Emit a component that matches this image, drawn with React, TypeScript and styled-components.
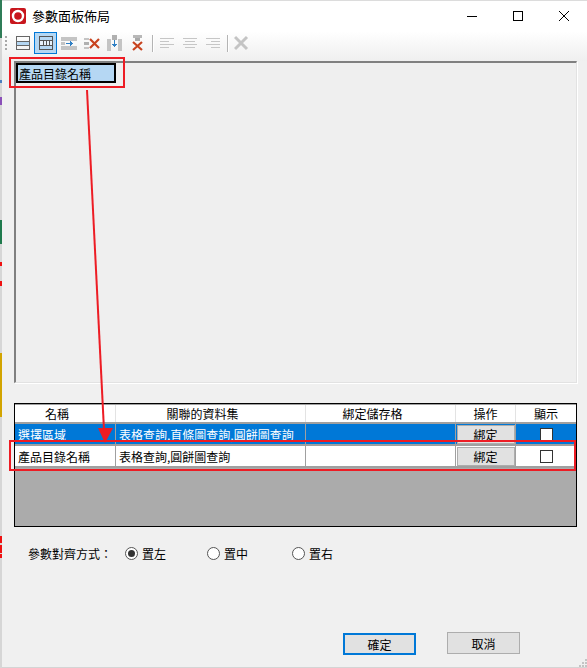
import React from 'react'
import styled, { createGlobalStyle } from 'styled-components'

const GlobalStyle = createGlobalStyle`
    html, body {
        margin: 0;
        padding: 0;
        background: #f0f0f0;
    }
    * {
        box-sizing: border-box;
    }
`

const Page = styled.div`
    position: relative;
    display: flex;
    width: 587px;
    height: 668px;
    overflow: hidden;
    font-family: "Noto Sans CJK TC", "Liberation Sans", sans-serif;
    font-size: 12px;
    color: #000;
`

const Strip = styled.div`
    display: flex;
    flex-direction: column;
    flex: 0 0 2px;
`

const StripPart = styled.div<{ $h: number; $c: string }>`
    height: ${p => p.$h}px;
    background: ${p => p.$c};
`

const Win = styled.div`
    display: flex;
    flex-direction: column;
    flex: 1;
    background: #f0f0f0;
    border-bottom: 1px solid #d4d4d4;
`

const TitleBar = styled.div`
    display: flex;
    align-items: center;
    height: 31px;
    padding-left: 8px;
    background: #fff;
    border-top: 1px solid #dcdcdc;
`

const Title = styled.div`
    margin-left: 6px;
    font-size: 13px;
    line-height: 18px;
`

const WinControls = styled.div`
    display: flex;
    margin-left: auto;
`

const WinControl = styled.div`
    display: flex;
    align-items: center;
    justify-content: center;
    width: 46px;
    height: 30px;
`

const Toolbar = styled.div`
    display: flex;
    align-items: center;
    height: 30px;
    padding: 0 0 6px 2px;
    background: linear-gradient(#ffffff, #efefef);
`

const Grip = styled.div`
    width: 2px;
    height: 15px;
    margin: 0 4px 0 1px;
    background: repeating-linear-gradient(#a8a8a8 0 2px, transparent 2px 4px);
`

const ToolButton = styled.div<{ $active?: boolean }>`
    display: flex;
    align-items: center;
    justify-content: center;
    width: 23px;
    height: 22px;
    border: 1px solid ${p => (p.$active ? '#0078d7' : 'transparent')};
    background: ${p => (p.$active ? '#b5d7f3' : 'transparent')};
`

const ToolSep = styled.div`
    width: 1px;
    height: 17px;
    margin: 0 2px 0 3px;
    background: #b4b4b4;
    box-shadow: 1px 0 0 #fff;
`

const Content = styled.div`
    display: flex;
    flex-direction: column;
    flex: 1;
    padding: 0 10px 0 12px;
`

const Panel = styled.div`
    height: 322px;
    background: #efefef;
    border-style: solid;
    border-width: 2px 1px 1px 2px;
    border-color: #808080 #e2e2e2 #e2e2e2 #808080;
    box-shadow: 1px 1px 0 #fff;
`

const PanelItem = styled.div`
    display: flex;
    align-items: center;
    width: 100px;
    height: 20px;
    padding-left: 1px;
    background: #b5d7f3;
    border: 2px solid #000;
`

const Table = styled.div`
    display: flex;
    flex-direction: column;
    height: 124px;
    margin-top: 20px;
    background: #ababab;
    border: 1px solid #000;
`

const Row = styled.div<{ $kind: 'head' | 'selected' | 'plain' }>`
    display: grid;
    grid-template-columns: 101px 190px 150px 60px 60px;
    height: ${p => (p.$kind === 'head' ? 20 : 22)}px;
    background: ${p => (p.$kind === 'selected' ? '#0078d7' : '#fff')};
    color: ${p => (p.$kind === 'selected' ? '#fff' : '#000')};
    border-top: ${p => (p.$kind === 'head' ? '1px solid #a0a0a0' : 'none')};
    border-bottom: 2px solid #a0a0a0;
`

const Cell = styled.div`
    display: flex;
    align-items: center;
    padding-left: 3px;
    border-right: 1px solid #a0a0a0;
    white-space: nowrap;
    overflow: hidden;
    &:last-child {
        border-right: none;
    }
`

const ControlCell = styled(Cell)`
    justify-content: center;
    padding-left: 0;
`

const HeadCell = styled(Cell)<{ $inset?: boolean }>`
    justify-content: center;
    padding: 0 ${p => (p.$inset ? 16 : 0)}px 0 0;
    border-right-color: #e3e3e3;
`

const GridButton = styled.div`
    display: flex;
    align-items: center;
    justify-content: center;
    width: 58px;
    height: 19px;
    color: #000;
    background: #e1e1e1;
    border: 1px solid #adadad;
`

const Check = styled.div`
    width: 13px;
    height: 13px;
    background: #fff;
    border: 1px solid #333;
`

const AlignRow = styled.div`
    display: flex;
    align-items: center;
    height: 16px;
    margin-top: 18px;
    padding-left: 14px;
`

const AlignLabel = styled.div`
    width: 97px;
`

const RadioOption = styled.div<{ $w: number }>`
    display: flex;
    align-items: center;
    gap: 4px;
    width: ${p => p.$w}px;
`

const RadioDot = styled.div<{ $on?: boolean }>`
    display: flex;
    align-items: center;
    justify-content: center;
    width: 13px;
    height: 13px;
    background: #fff;
    border: 1px solid #555;
    border-radius: 50%;
    &::after {
        content: '';
        width: 7px;
        height: 7px;
        border-radius: 50%;
        background: ${p => (p.$on ? '#333' : 'transparent')};
    }
`

const Footer = styled.div`
    display: flex;
    align-items: flex-start;
    margin-top: 71px;
    padding-left: 329px;
`

const DialogButton = styled.div<{ $primary?: boolean }>`
    display: flex;
    align-items: center;
    justify-content: center;
    width: 73px;
    height: 22px;
    margin-top: ${p => (p.$primary ? 1 : 0)}px;
    margin-left: ${p => (p.$primary ? 0 : 31)}px;
    background: #e1e1e1;
    border: ${p => (p.$primary ? '2px solid #0078d7' : '1px solid #adadad')};
`

const ResizeGrip = styled.svg`
    position: absolute;
    right: 0;
    bottom: 1px;
`

const Callout = styled.div<{ $x: number; $y: number; $w: number; $h: number }>`
    position: absolute;
    left: ${p => p.$x}px;
    top: ${p => p.$y}px;
    width: ${p => p.$w}px;
    height: ${p => p.$h}px;
    border: 2px solid #ed1c24;
`

const ArrowLayer = styled.svg`
    position: absolute;
    left: 0;
    top: 0;
    pointer-events: none;
`

const Icon = ({ children }: { children: React.ReactNode }) => (
    <svg width="16" height="16" viewBox="0 0 16 16" shapeRendering="crispEdges">{children}</svg>
)

const GREY = '#d6d6d6'
const RED = '#ee1111'

const stripParts = [
    { h: 38, c: '#2f7d58' },
    { h: 42, c: GREY },
    { h: 3, c: '#4a7fc0' },
    { h: 14, c: GREY },
    { h: 8, c: '#8a4fb8' },
    { h: 115, c: GREY },
    { h: 24, c: '#1f7a4d' },
    { h: 18, c: GREY },
    { h: 4, c: RED },
    { h: 15, c: GREY },
    { h: 5, c: RED },
    { h: 67, c: GREY },
    { h: 64, c: '#d2a400' },
    { h: 119, c: GREY },
    { h: 7, c: RED },
    { h: 2, c: GREY },
    { h: 8, c: RED },
    { h: 1, c: GREY },
    { h: 4, c: RED },
    { h: 110, c: GREY },
]

const rows = [
    { name: '選擇區域', sets: '表格查詢,直條圖查詢,圓餅圖查詢', kind: 'selected' as const },
    { name: '產品目錄名稱', sets: '表格查詢,圓餅圖查詢', kind: 'plain' as const },
]

const App = () => {
    return (
        <Page>
            <GlobalStyle />
            <Strip>
                {stripParts.map((part, index) => (
                    <StripPart key={index} $h={part.h} $c={part.c} />
                ))}
            </Strip>
            <Win>
                <TitleBar>
                    <svg width="16" height="16" viewBox="0 0 16 16">
                        <rect width="16" height="16" rx="2" fill="#c8161d" />
                        <circle cx="8" cy="8" r="5" fill="none" stroke="#fff" strokeWidth="2.4" />
                    </svg>
                    <Title>參數面板佈局</Title>
                    <WinControls>
                        <WinControl>
                            <svg width="10" height="10" viewBox="0 0 10 10" shapeRendering="crispEdges">
                                <path d="M0 5.5H10" stroke="#000" />
                            </svg>
                        </WinControl>
                        <WinControl>
                            <svg width="10" height="10" viewBox="0 0 10 10" shapeRendering="crispEdges">
                                <rect x="0.5" y="0.5" width="9" height="9" fill="none" stroke="#000" />
                            </svg>
                        </WinControl>
                        <WinControl>
                            <svg width="10" height="10" viewBox="0 0 10 10">
                                <path d="M0 0L10 10M10 0L0 10" stroke="#000" strokeWidth="1" />
                            </svg>
                        </WinControl>
                    </WinControls>
                </TitleBar>
                <Toolbar>
                    <Grip />
                    <ToolButton>
                        <Icon>
                            <rect x="2" y="6" width="12" height="4" fill="#b5d7f3" />
                            <path d="M1.5 1.5H14.5V14.5H1.5ZM1.5 6H14.5M1.5 10.5H14.5" fill="none" stroke="#666" />
                        </Icon>
                    </ToolButton>
                    <ToolButton $active>
                        <Icon>
                            <rect x="2" y="6" width="12" height="5" fill="#e8f2fb" />
                            <path d="M1.5 1.5H14.5V14.5H1.5ZM1.5 5.5H14.5M1.5 10.5H14.5M5.5 5.5V10.5M8.5 5.5V10.5M11.5 5.5V10.5" fill="none" stroke="#555" />
                        </Icon>
                    </ToolButton>
                    <ToolButton>
                        <Icon>
                            <rect x="0" y="2" width="16" height="4" fill="#c4c4c4" />
                            <rect x="0" y="11" width="16" height="4" fill="#c4c4c4" />
                            <rect x="0" y="7" width="4" height="3" fill="#c4c4c4" />
                            <path d="M5 8.5H11M9 6.5L11 8.5L9 10.5" fill="none" stroke="#2f7fc4" />
                        </Icon>
                    </ToolButton>
                    <ToolButton>
                        <Icon>
                            <rect x="0" y="3" width="5" height="2" fill="#c4c4c4" />
                            <rect x="0" y="7" width="5" height="3" fill="#b0b0b0" />
                            <rect x="0" y="12" width="5" height="2" fill="#c4c4c4" />
                            <path d="M6 4L15 13M15 4L6 13" stroke="#c8431f" strokeWidth="2.2" shapeRendering="auto" />
                        </Icon>
                    </ToolButton>
                    <ToolButton>
                        <Icon>
                            <rect x="0" y="4" width="4" height="12" fill="#c4c4c4" />
                            <rect x="11" y="4" width="4" height="12" fill="#c4c4c4" />
                            <rect x="5" y="0" width="5" height="5" fill="#b0b0b0" />
                            <path d="M7.5 5V11M5.5 9L7.5 11L9.5 9" fill="none" stroke="#2f7fc4" />
                        </Icon>
                    </ToolButton>
                    <ToolButton>
                        <Icon>
                            <rect x="3" y="0" width="9" height="3" fill="#b8b8b8" />
                            <rect x="5" y="3" width="5" height="3" fill="#a8a8a8" />
                            <path d="M3 7L12 15M12 7L3 15" stroke="#c8431f" strokeWidth="2.2" shapeRendering="auto" />
                        </Icon>
                    </ToolButton>
                    <ToolSep />
                    <ToolButton>
                        <Icon>
                            <path d="M1 3.5H15M1 6.5H10M1 9.5H15M1 12.5H10" stroke="#c6c6c6" />
                        </Icon>
                    </ToolButton>
                    <ToolButton>
                        <Icon>
                            <path d="M1 3.5H15M3 6.5H13M1 9.5H15M3 12.5H13" stroke="#c6c6c6" />
                        </Icon>
                    </ToolButton>
                    <ToolButton>
                        <Icon>
                            <path d="M1 3.5H15M6 6.5H15M1 9.5H15M6 12.5H15" stroke="#c6c6c6" />
                        </Icon>
                    </ToolButton>
                    <ToolSep />
                    <ToolButton>
                        <Icon>
                            <path d="M1 2L13 14M13 2L1 14" stroke="#c4c4c4" strokeWidth="3" shapeRendering="auto" />
                        </Icon>
                    </ToolButton>
                </Toolbar>
                <Content>
                    <Panel>
                        <PanelItem>產品目錄名稱</PanelItem>
                    </Panel>
                    <Table>
                        <Row $kind="head">
                            <HeadCell $inset>名稱</HeadCell>
                            <HeadCell $inset>關聯的資料集</HeadCell>
                            <HeadCell $inset>綁定儲存格</HeadCell>
                            <HeadCell>操作</HeadCell>
                            <HeadCell>顯示</HeadCell>
                        </Row>
                        {rows.map(row => (
                            <Row key={row.name} $kind={row.kind}>
                                <Cell>{row.name}</Cell>
                                <Cell>{row.sets}</Cell>
                                <Cell />
                                <ControlCell><GridButton>綁定</GridButton></ControlCell>
                                <ControlCell><Check /></ControlCell>
                            </Row>
                        ))}
                    </Table>
                    <AlignRow>
                        <AlignLabel>參數對齊方式：</AlignLabel>
                        <RadioOption $w={82}><RadioDot $on />置左</RadioOption>
                        <RadioOption $w={85}><RadioDot />置中</RadioOption>
                        <RadioOption $w={85}><RadioDot />置右</RadioOption>
                    </AlignRow>
                    <Footer>
                        <DialogButton $primary>確定</DialogButton>
                        <DialogButton>取消</DialogButton>
                    </Footer>
                </Content>
            </Win>
            <ResizeGrip width="9" height="9" viewBox="0 0 9 9" shapeRendering="crispEdges">
                <path d="M7 1h2v2H7zM4 4h2v2H4zM7 4h2v2H7zM1 7h2v2H1zM4 7h2v2H4zM7 7h2v2H7z" fill="#c4c4c4" />
            </ResizeGrip>
            <Callout $x={9} $y={57} $w={116} $h={31} />
            <Callout $x={9} $y={440} $w={567} $h={31} />
            <ArrowLayer width="587" height="668" viewBox="0 0 587 668">
                <path d="M87 90L104 430" stroke="#ed1c24" strokeWidth="2" fill="none" />
                <path d="M98 428L113 428L105 443Z" fill="#ed1c24" />
            </ArrowLayer>
        </Page>
    )
}

export default App
